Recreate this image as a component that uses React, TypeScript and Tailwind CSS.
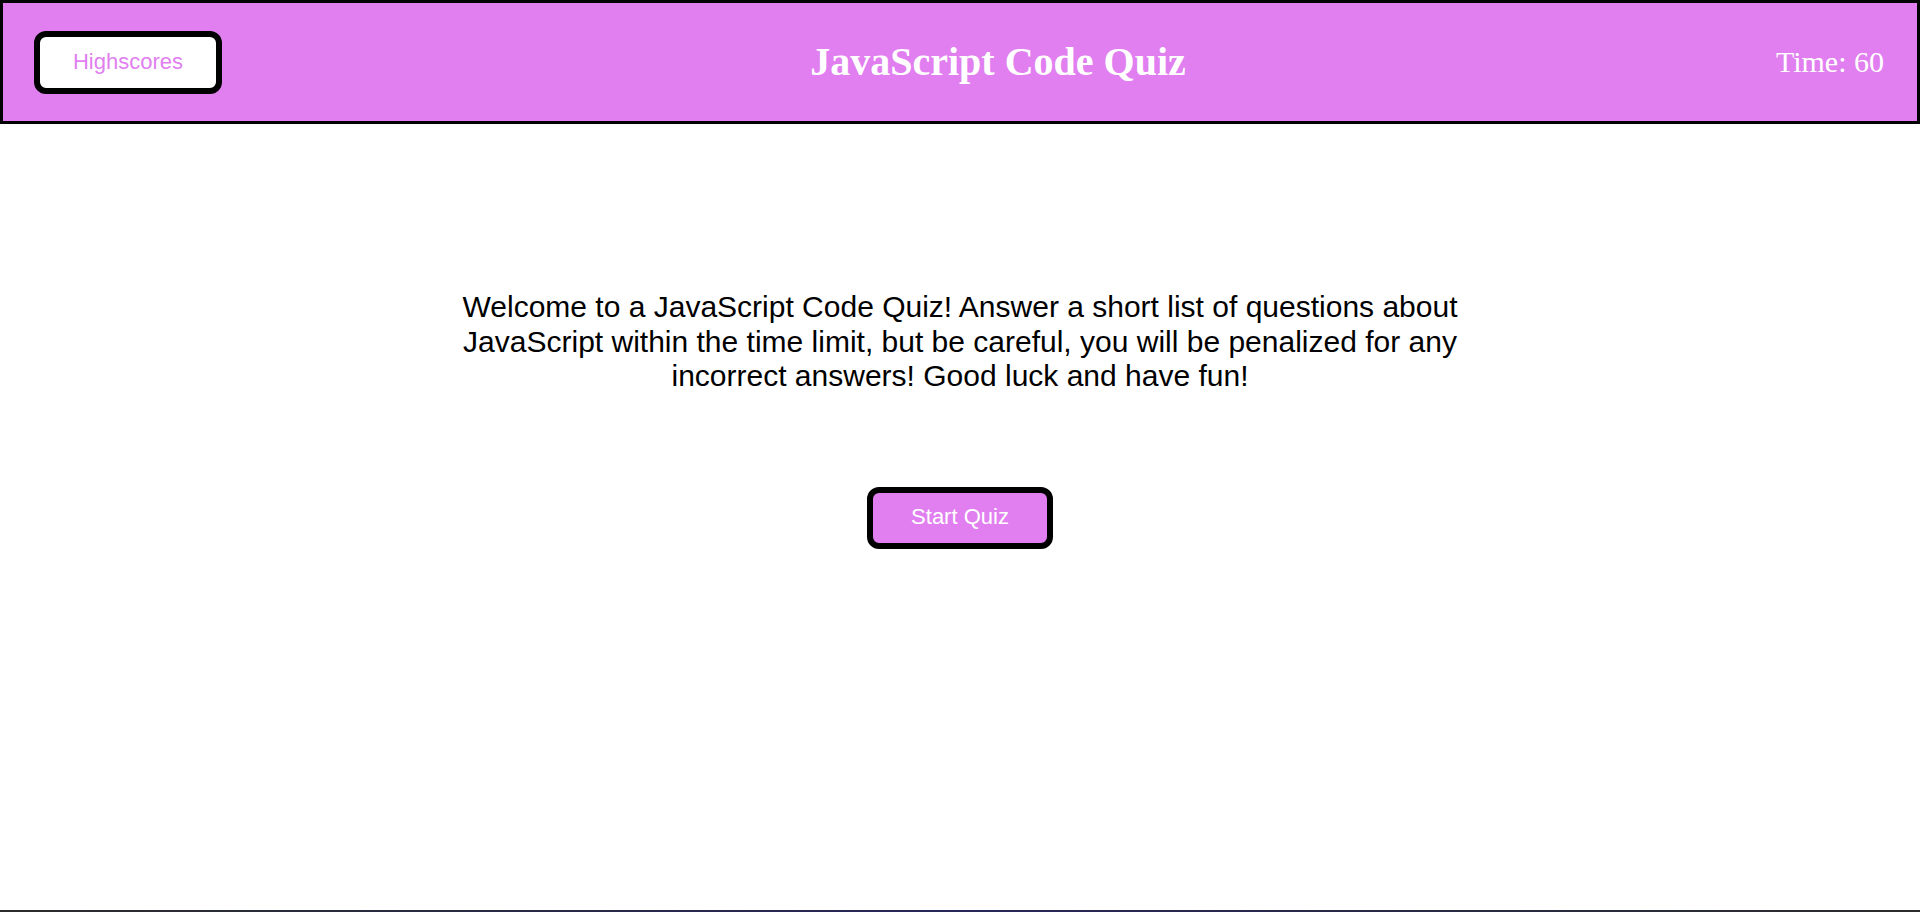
import React from 'react';

export default function App() {
  const [time] = React.useState(60);

  return (
    <div className="h-[912px] flex flex-col bg-white" style={{ fontFamily: '"Liberation Sans", Arial, sans-serif' }}>
      {/* top bar */}
      <header className="h-[124px] shrink-0 flex items-center justify-between border-[3px] border-black bg-[#e17ff0] pl-[31px] pr-[33px]">
        <button className="w-[188px] h-[63px] border-[6px] border-black rounded-[12px] bg-white text-[22px] text-[#e17ff0] flex items-center justify-center pb-[2px]">
          Highscores
        </button>
        <h1 className="text-[40px] font-bold text-white font-['Liberation_Serif',serif] leading-none">
          JavaScript Code Quiz
        </h1>
        <div className="text-[30px] text-white font-['Liberation_Serif',serif] leading-none w-[110px] text-right">
          Time: {time}
        </div>
      </header>

      {/* intro */}
      <main className="flex-1 flex flex-col items-center pt-[166px]">
        <p className="w-[1050px] text-center text-[30px] leading-[1.15] text-black">
          Welcome to a JavaScript Code Quiz! Answer a short list of questions about JavaScript within the time
          limit, but be careful, you will be penalized for any incorrect answers! Good luck and have fun!
        </p>
        <button className="mt-[93px] w-[186px] h-[62px] border-[6px] border-black rounded-[12px] bg-[#e17ff0] text-[22px] text-white flex items-center justify-center pb-[2px]">
          Start Quiz
        </button>
      </main>

      <div className="h-[2px] shrink-0 bg-gradient-to-r from-[#2b2b2b] via-[#26265a] to-[#2b2b2b]" />
    </div>
  );
}
